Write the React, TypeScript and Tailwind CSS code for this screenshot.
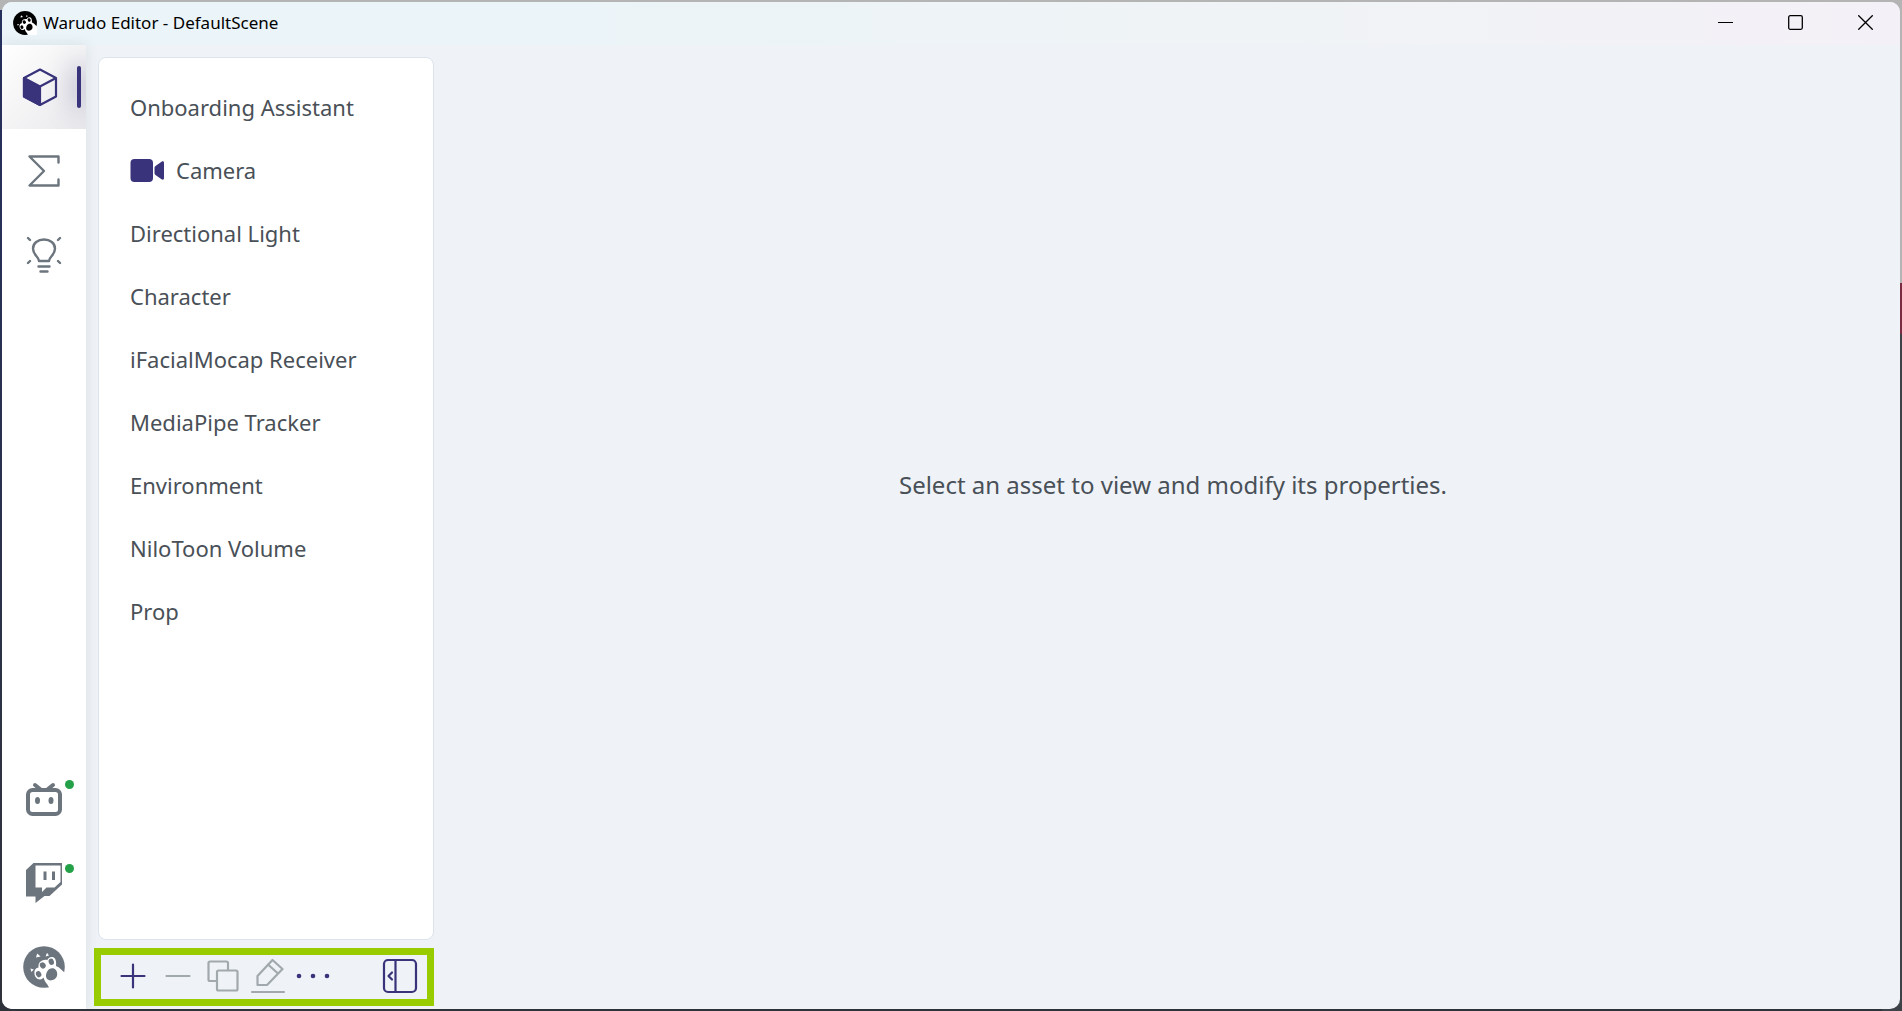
import type { ReactNode } from 'react';

const ASSETS = [
    { name: 'Onboarding Assistant' },
    { name: 'Camera', camera: true },
    { name: 'Directional Light' },
    { name: 'Character' },
    { name: 'iFacialMocap Receiver' },
    { name: 'MediaPipe Tracker' },
    { name: 'Environment' },
    { name: 'NiloToon Volume' },
    { name: 'Prop' },
];

// Paw logo, the circle takes the current text color
function PawLogo({ className }: { className: string }) {
    return (
        <svg viewBox="0 0 42 42" className={className} aria-hidden="true">
            <circle cx="21" cy="21" r="20.8" fill="currentColor" />
            <path
                fill="#fff"
                d="M27 43L24 38C22.6 36.6 21.2 34.4 20.6 31.6C19.8 32.6 18.6 33.4 17 33.4C13.8 33.4 11.6 30.6 11.4 27.2C11.2 24 12.6 21.8 15.6 21.4C15 18.4 16.2 15.8 19.2 14.6C20.8 14 22.6 13.4 24.2 14.2C25 12.4 26.6 11.1 28.6 11C32.2 10.8 33.6 14.5 33 19.8C33.8 20.8 35.5 21 36.5 22L43 28V43Z"
            />
            <g fill="currentColor">
                <ellipse cx="28.3" cy="15.8" rx="2.6" ry="3.2" transform="rotate(-20 28.3 15.8)" />
                <ellipse cx="19.8" cy="19.4" rx="2.8" ry="3.2" transform="rotate(-35 19.8 19.4)" />
                <ellipse cx="15.6" cy="28.2" rx="2.6" ry="3.2" transform="rotate(-25 15.6 28.2)" />
                <path d="M24.2 25.4C25.8 22.8 28.8 21.6 31.4 22.8C33.8 24 34.8 27.4 34 30C33.2 32.8 30.4 34.4 27.6 34.4C25 34.4 23.2 33 23 30.6C22.9 28.6 23.2 27 24.2 25.4Z" />
            </g>
            <path fill="#fff" d="M13 11.4L14.2 7.6L17.6 10.4ZM22.6 10.4L24 6.8L26 9.4ZM7.4 22.6L10.8 23.4L8.4 26Z" />
        </svg>
    );
}

function CubeIcon() {
    return (
        <svg viewBox="0 0 36 40" className="h-10 w-9" fill="none" stroke="currentColor" strokeWidth="2.2" strokeLinejoin="round">
            <path d="M18 2.5L34 11V29.5L18 38L2 29.5V11Z" />
            <path d="M18 19.5L34 11" />
            <path d="M2 11L18 19.5V38L2 29.5Z" fill="currentColor" />
        </svg>
    );
}

function SigmaIcon() {
    return (
        <svg viewBox="0 0 36 36" className="size-9" fill="none" stroke="currentColor" strokeWidth="2.4" strokeLinejoin="round" strokeLinecap="round">
            <path d="M32.5 9.5V3.5H3.5L18 18L3.5 32.5H32.5V26.5" />
        </svg>
    );
}

function BulbIcon() {
    return (
        <svg viewBox="0 0 36 40" className="h-10 w-9" fill="none" stroke="currentColor" strokeWidth="2.4" strokeLinejoin="round" strokeLinecap="round">
            <path d="M13 26C13 21.5 7 20.5 7 13.5C7 8 12 4.5 18 4.5S29 8 29 13.5C29 20.5 23 21.5 23 26Z" />
            <path d="M12.5 31.5H23.5M14.5 36.5H21.5" />
            <path d="M2 3L4 5M34 3L32 5M4 26L2 28M32 26L34 28" />
        </svg>
    );
}

function BilibiliIcon() {
    return (
        <svg viewBox="0 0 36 34" className="h-[34px] w-9" fill="none" stroke="currentColor" strokeLinecap="round">
            <rect x="2" y="8" width="32" height="24" rx="4.5" strokeWidth="4" />
            <path d="M9 3L14 7M27 3L22 7" strokeWidth="4" />
            <ellipse cx="11.5" cy="18.5" rx="2.5" ry="3.5" fill="currentColor" stroke="none" />
            <ellipse cx="25" cy="18.5" rx="2.5" ry="3.5" fill="currentColor" stroke="none" />
        </svg>
    );
}

function TwitchIcon() {
    return (
        <svg viewBox="0 0 36 40" className="h-10 w-9" fill="currentColor">
            <path fillRule="evenodd" d="M7.5 0H36.5V21L23.5 33H18.500L9.500 40V33.5H0V7ZM9.5 2.500V24.5H16V29L20.5 24.5H28.500L34.500 19V2.500Z" />
            <path d="M17.500 8.500H20.500V17H17.500ZM26 8.500H29V17H26Z" />
        </svg>
    );
}

function CameraIcon() {
    return (
        <svg viewBox="0 0 34 24" className="h-6 w-[34px] text-[#38337a]" fill="currentColor" aria-hidden="true">
            <rect x="0.5" y="1" width="22.5" height="23" rx="4" />
            <path d="M24.5 10C24.5 9 25 8.6 25.5 8L31.5 3.8C33 2.8 34 3.4 34 5V20C34 21.6 33 22.2 31.5 21.2L25.5 17C25 16.4 24.5 16 24.5 15Z" />
        </svg>
    );
}

function ToolIcon({ children }: { children: ReactNode }) {
    return (
        <svg viewBox="0 0 36 36" className="size-9" fill="none" stroke="currentColor" strokeWidth="2.2" strokeLinecap="round" strokeLinejoin="round">
            {children}
        </svg>
    );
}

function SideButton({ label, active, online, children }: { label: string; active?: boolean; online?: boolean; children: ReactNode }) {
    return (
        <button
            type="button"
            aria-label={label}
            className={`relative flex h-[84px] w-full shrink-0 items-center justify-center overflow-hidden ${active
                ? 'bg-linear-to-br from-white to-[#e9e9ec] pr-2 text-[#38337a]'
                : 'text-[#6c757d]'
                }`}
        >
            {children}
            {active && <span className="absolute top-[21px] right-[5px] h-[42px] w-1 rounded-full bg-[#38337a] shadow-[0_0_24px_2px_rgba(56,51,122,0.5)]" />}
            {online && <span className="absolute top-[23px] right-3 size-[9px] rounded-full bg-[#24a148]" />}
        </button>
    );
}

function ToolButton({ label, disabled, children }: { label: string; disabled?: boolean; children: ReactNode }) {
    return (
        <button
            type="button"
            aria-label={label}
            disabled={disabled}
            className="flex h-11 w-[45px] items-center justify-center text-[#38337a] disabled:text-[#a1a8ae]"
        >
            <ToolIcon>{children}</ToolIcon>
        </button>
    );
}

function TitleBar() {
    return (
        <header className="flex h-[43px] shrink-0 items-center bg-linear-to-r from-[#ebf4f8] from-30% via-[#f1f3f6] via-75% to-[#f4f0f7] pb-0.5 pl-[11px] text-black">
            <PawLogo className="size-6" />
            <h1 className="ml-1.5 text-[17px]/6">Warudo Editor - DefaultScene</h1>
            <div className="ml-auto flex h-full">
                <button type="button" aria-label="Minimize" className="flex w-[70px] items-center justify-center">
                    <svg viewBox="0 0 15 15" className="size-[15px]"><path d="M0 7.5H15" stroke="currentColor" /></svg>
                </button>
                <button type="button" aria-label="Maximize" className="flex w-[70px] items-center justify-center">
                    <svg viewBox="0 0 15 15" className="size-[15px]" fill="none" stroke="currentColor" strokeWidth="1.3">
                        <rect x="0.7" y="0.7" width="13.6" height="13.6" rx="1.5" />
                    </svg>
                </button>
                <button type="button" aria-label="Close" className="flex w-[70px] items-center justify-center">
                    <svg viewBox="0 0 15 15" className="size-[15px]" stroke="currentColor" strokeWidth="1.3">
                        <path d="M0.3 0.3L14.7 14.7M14.7 0.3L0.3 14.7" />
                    </svg>
                </button>
            </div>
        </header>
    );
}

function Sidebar() {
    return (
        <nav className="z-10 flex w-[84px] shrink-0 flex-col bg-white shadow-[0_0_12px_rgba(60,80,100,0.12)]">
            <SideButton label="Assets" active><CubeIcon /></SideButton>
            <SideButton label="Blueprints"><SigmaIcon /></SideButton>
            <SideButton label="Tips"><BulbIcon /></SideButton>
            <div className="flex-1" />
            <SideButton label="Bilibili" online><BilibiliIcon /></SideButton>
            <SideButton label="Twitch" online><TwitchIcon /></SideButton>
            <SideButton label="Settings"><PawLogo className="size-[42px]" /></SideButton>
        </nav>
    );
}

function AssetPanel() {
    return (
        <section className="flex w-[336px] shrink-0 flex-col pt-3 pb-[3px]">
            <ul className="flex-1 rounded-lg border border-[#dbe4ec] bg-white pt-[17px]">
                {ASSETS.map((asset) => (
                    <li key={asset.name}>
                        <button type="button" className="flex h-[63px] w-full items-center gap-3 px-[31px] text-left text-[22px]/8">
                            {asset.camera && <CameraIcon />}
                            {asset.name}
                        </button>
                    </li>
                ))}
            </ul>
            <div className="mt-2 -ml-1 flex h-[58px] items-center border-[7px] border-[#99cc00] pr-[5px] pb-0.5 pl-[9px]">
                <ToolButton label="Add"><path d="M18 6.5V29.5M6.5 18H29.5" /></ToolButton>
                <ToolButton label="Remove" disabled><path d="M6.5 18H29.5" /></ToolButton>
                <ToolButton label="Duplicate" disabled>
                    <path d="M12 23H5A1.5 1.5 0 0 1 3.5 21.5V5A1.5 1.5 0 0 1 5 3.5H21.5A1.5 1.5 0 0 1 23 5V12" />
                    <rect x="12" y="12.5" width="20.5" height="20" rx="1.5" />
                </ToolButton>
                <ToolButton label="Rename" disabled>
                    <path d="M7.5 18L22.5 2L32.5 11L18 26L17 27H7.5ZM18 6.5L28 15.5M2 34H34" />
                </ToolButton>
                <ToolButton label="More">
                    <g fill="currentColor" stroke="none">
                        <circle cx="4" cy="18" r="2.3" />
                        <circle cx="18" cy="18" r="2.3" />
                        <circle cx="32" cy="18" r="2.3" />
                    </g>
                </ToolButton>
                <div className="ml-auto flex">
                    <ToolButton label="Collapse panel">
                        <rect x="2" y="2" width="32" height="32" rx="4" />
                        <path d="M13.5 2V34M10 14.5L6.5 18L10 21.5" />
                    </ToolButton>
                </div>
            </div>
        </section>
    );
}

export default function App() {
    return (
        <div className="h-screen p-0.5 font-['Noto_Sans','Open_Sans',sans-serif] [background:linear-gradient(#b4b4b4,#b4b4b4)_top/100%_10px_no-repeat,linear-gradient(#b4b4b4_28%,#7a2c40_28%_33%,#3c4248_33%)_right/20px_100%_no-repeat,linear-gradient(#25305e,#30323a)]">
            <div className="flex h-full flex-col overflow-hidden rounded-[10px] bg-[#eff3f7] text-[#495057]">
                <TitleBar />
                <div className="flex min-h-0 flex-1 gap-3">
                    <Sidebar />
                    <AssetPanel />
                    <main className="flex flex-1 items-center justify-center pb-[84px]">
                        <p className="text-2xl">Select an asset to view and modify its properties.</p>
                    </main>
                </div>
            </div>
        </div>
    );
}
